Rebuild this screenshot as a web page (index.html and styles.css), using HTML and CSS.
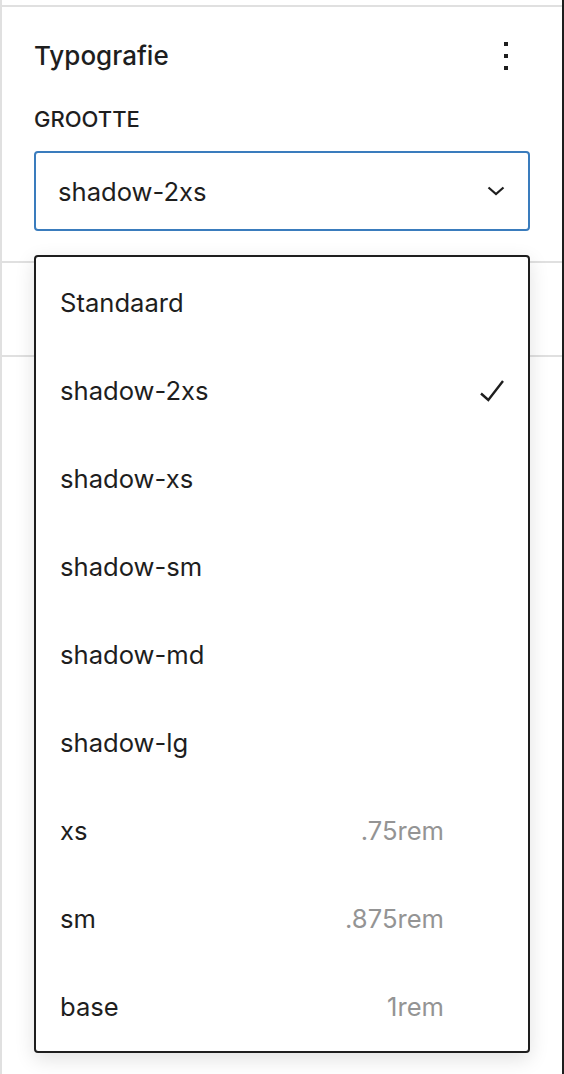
FILE: index.html
```html
<!DOCTYPE html>
<html lang="nl">
<head>
<meta charset="utf-8">
<title>Typografie</title>
<link rel="stylesheet" href="styles.css">
</head>
<body>
<div class="sidebar">
  <section class="panel panel-typo">
    <div class="panel-head">
      <h2 class="panel-title">Typografie</h2>
      <button class="kebab" type="button" aria-label="Opties">
        <span class="dot"></span><span class="dot"></span><span class="dot"></span>
      </button>
    </div>
    <div class="field">
      <div class="field-label">Grootte</div>
      <div class="select-wrap">
        <div class="select">
          <span class="select-value">shadow-2xs</span>
          <svg class="chevron" width="18" height="10" viewBox="0 0 18 10" aria-hidden="true">
            <polyline points="1.5,1.5 9,8 16.5,1.5" fill="none" stroke="#1e1e1e" stroke-width="2.2"/>
          </svg>
        </div>
        <ul class="menu">
          <li class="item"><span class="item-label">Standaard</span><span class="check"></span></li>
          <li class="item"><span class="item-label">shadow-2xs</span><span class="check"><svg width="24" height="23" viewBox="0 0 24 23" aria-hidden="true"><polyline points="1,14.5 8.3,21 23,2" fill="none" stroke="#1e1e1e" stroke-width="2.4"/></svg></span></li>
          <li class="item"><span class="item-label">shadow-xs</span><span class="check"></span></li>
          <li class="item"><span class="item-label">shadow-sm</span><span class="check"></span></li>
          <li class="item"><span class="item-label">shadow-md</span><span class="check"></span></li>
          <li class="item"><span class="item-label">shadow-lg</span><span class="check"></span></li>
          <li class="item"><span class="item-label">xs</span><span class="hint">.75rem</span><span class="check"></span></li>
          <li class="item"><span class="item-label">sm</span><span class="hint">.875rem</span><span class="check"></span></li>
          <li class="item"><span class="item-label">base</span><span class="hint">1rem</span><span class="check"></span></li>
        </ul>
      </div>
    </div>
  </section>
  <section class="panel panel-collapsed"></section>
  <section class="panel panel-rest"></section>
</div>
</body>
</html>
```
FILE: styles.css
```css
* { box-sizing: border-box; }
html, body { margin: 0; padding: 0; background: #fff; }
body {
  font-family: Inter, "Noto Sans", "Liberation Sans", sans-serif;
  color: #1e1e1e;
}
.sidebar {
  height: 1074px;
  border-left: 2px solid #e0e0e0;
  border-right: 2px solid #1e1e1e;
  padding-top: 5px;
  display: flex;
  flex-direction: column;
}
.panel { border-top: 2px solid #e0e0e0; }
.panel-typo { padding: 25px 32px 30px; }
.panel-collapsed { height: 94px; }
.panel-rest { flex: 1; }
.panel-head {
  display: flex;
  align-items: center;
  justify-content: space-between;
  height: 48px;
}
.panel-title {
  margin: 0;
  font-size: 26px;
  font-weight: 500;
  line-height: 48px;
}
.kebab {
  width: 48px;
  height: 48px;
  padding: 0;
  border: 0;
  background: none;
  display: flex;
  flex-direction: column;
  align-items: center;
  justify-content: center;
  gap: 8px;
}
.dot { width: 4px; height: 4px; background: #1e1e1e; }
.field-label {
  margin-top: 23px;
  font-size: 22px;
  font-weight: 500;
  line-height: 32px;
  text-transform: uppercase;
}
.select-wrap { position: relative; margin-top: 16px; }
.select {
  height: 80px;
  border: 2px solid #3a7cbd;
  border-radius: 4px;
  display: flex;
  align-items: center;
  justify-content: space-between;
  padding: 0 23px 0 22px;
}
.select-value { font-size: 25.6px; }
.menu {
  position: absolute;
  top: calc(100% + 24px);
  left: 0;
  right: 0;
  margin: 0;
  padding: 1px 0;
  list-style: none;
  background: #fff;
  border: 2px solid #1e1e1e;
  border-radius: 4px;
  box-shadow: 0 6px 20px rgba(0, 0, 0, 0.12);
}
.item {
  height: 88px;
  display: flex;
  align-items: center;
  padding: 0 24px;
  font-size: 25.6px;
}
.item-label { flex: 1; }
.hint { color: #949494; }
.check {
  width: 60px;
  display: flex;
  justify-content: flex-end;
  align-items: center;
}
.check svg { display: block; }
```
